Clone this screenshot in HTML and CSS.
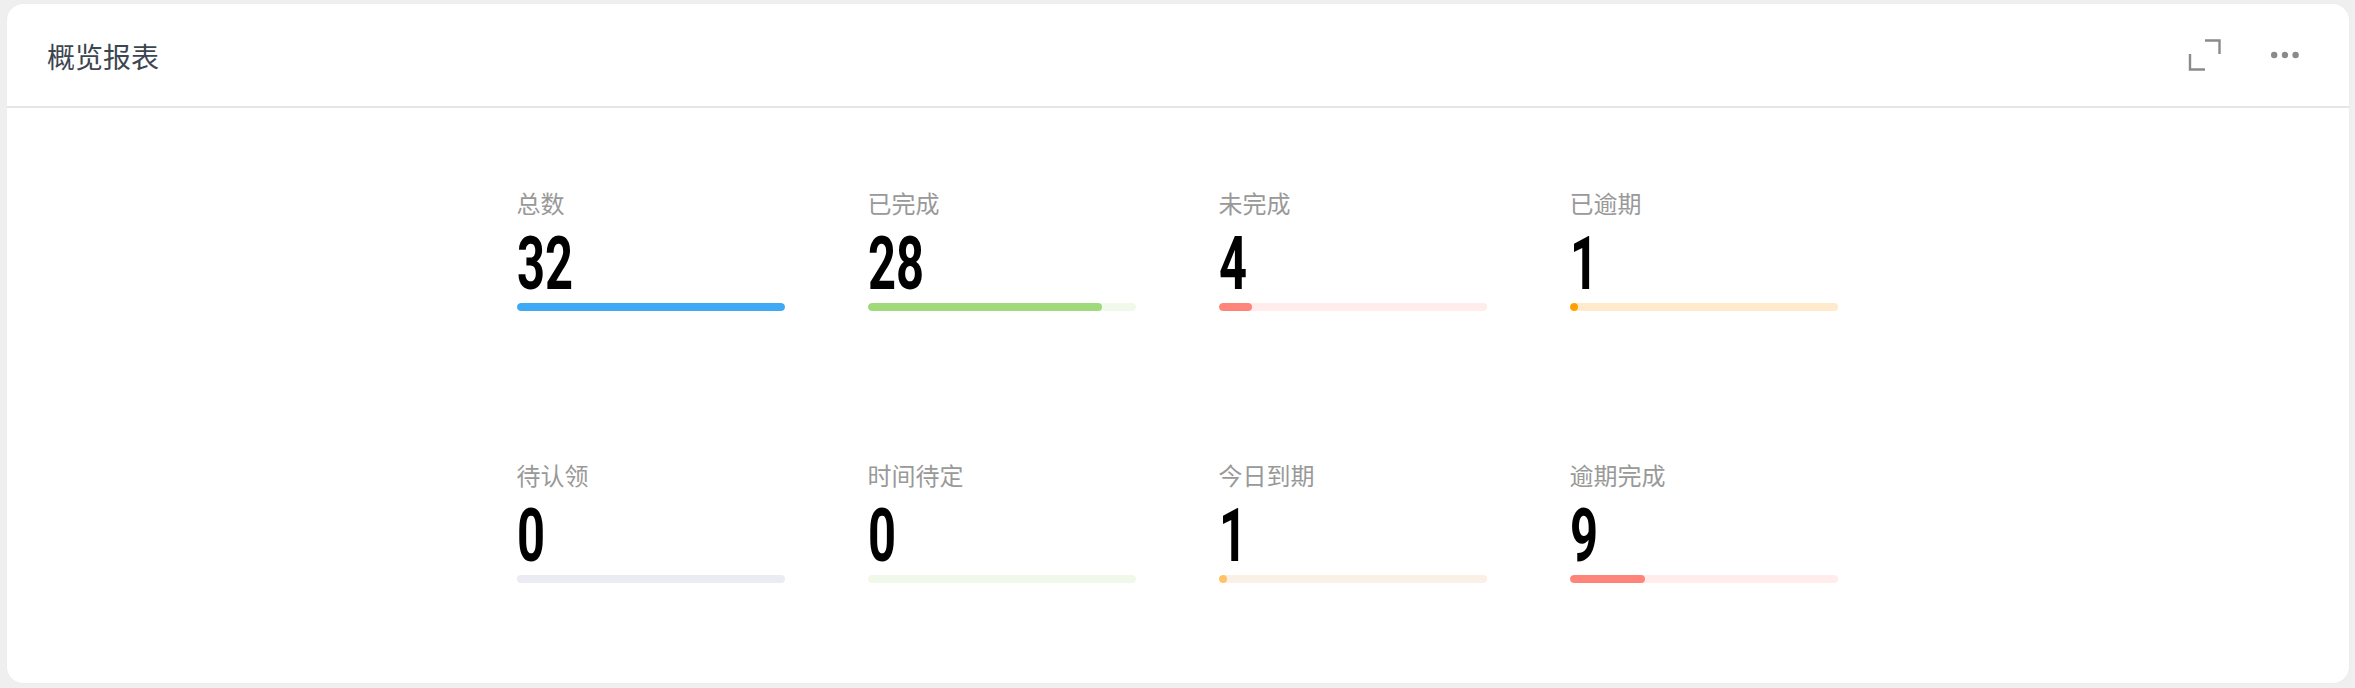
FILE: index.html
```html
<!DOCTYPE html>
<html lang="zh-CN">
<head>
<meta charset="utf-8">
<title>概览报表</title>
<link rel="stylesheet" href="styles.css">
</head>
<body>
<div class="card">
  <div class="card-header">
    <div class="card-title">概览报表</div>
    <div class="card-tools">
      <svg class="icon-expand" width="34" height="34" viewBox="0 0 34 34">
        <path d="M17 2.5 H31.5 V16" fill="none" stroke="#8a8a8a" stroke-width="2.4"/>
        <path d="M2 16 V31.5 H17" fill="none" stroke="#8a8a8a" stroke-width="2.4"/>
      </svg>
      <svg class="icon-more" width="28" height="8" viewBox="0 0 28 8">
        <circle cx="3.2" cy="4" r="3.2" fill="#8a8a8a"/>
        <circle cx="14" cy="4" r="3.2" fill="#8a8a8a"/>
        <circle cx="24.6" cy="4" r="3.2" fill="#8a8a8a"/>
      </svg>
    </div>
  </div>
  <div class="card-body">
    <div class="stats">
      <div class="stat">
        <div class="stat-label">总数</div>
        <div class="stat-value"><span class="num">32</span></div>
        <div class="bar track-blue"><div class="fill fill-blue" style="width:100%"></div></div>
      </div>
      <div class="stat">
        <div class="stat-label">已完成</div>
        <div class="stat-value"><span class="num">28</span></div>
        <div class="bar track-green"><div class="fill fill-green" style="width:87.5%"></div></div>
      </div>
      <div class="stat">
        <div class="stat-label">未完成</div>
        <div class="stat-value"><span class="num">4</span></div>
        <div class="bar track-red"><div class="fill fill-red" style="width:12.5%"></div></div>
      </div>
      <div class="stat">
        <div class="stat-label">已逾期</div>
        <div class="stat-value"><span class="num">1</span></div>
        <div class="bar track-orange"><div class="fill fill-orange" style="width:3.125%"></div></div>
      </div>
      <div class="stat">
        <div class="stat-label">待认领</div>
        <div class="stat-value"><span class="num">0</span></div>
        <div class="bar track-lavender"><div class="fill fill-lavender" style="width:0%"></div></div>
      </div>
      <div class="stat">
        <div class="stat-label">时间待定</div>
        <div class="stat-value"><span class="num">0</span></div>
        <div class="bar track-lightgreen"><div class="fill fill-green" style="width:0%"></div></div>
      </div>
      <div class="stat">
        <div class="stat-label">今日到期</div>
        <div class="stat-value"><span class="num">1</span></div>
        <div class="bar track-peach"><div class="fill fill-peach" style="width:3.125%"></div></div>
      </div>
      <div class="stat">
        <div class="stat-label">逾期完成</div>
        <div class="stat-value"><span class="num">9</span></div>
        <div class="bar track-red"><div class="fill fill-red" style="width:28.125%"></div></div>
      </div>
    </div>
  </div>
</div>
</body>
</html>
```
FILE: styles.css
```css
html, body {
  margin: 0;
  height: 100%;
}
body {
  background: #efefef;
  padding: 4px 6px 5px 7px;
  box-sizing: border-box;
  font-family: "Liberation Sans", "Noto Sans CJK SC", sans-serif;
  display: flex;
}
.card {
  flex: 1;
  background: #ffffff;
  border-radius: 16px;
  display: flex;
  flex-direction: column;
  box-shadow: 0 0 2px rgba(0, 0, 0, 0.04);
}
.card-header {
  height: 102px;
  border-bottom: 2px solid #e6e6e6;
  display: flex;
  align-items: center;
  justify-content: space-between;
  padding: 0 50px 0 40px;
}
.card-title {
  font-size: 28px;
  color: #3c4650;
  margin-top: 1px;
}
.card-tools {
  display: flex;
  align-items: center;
  gap: 49px;
}
.icon-expand {
  display: block;
}
.icon-more {
  display: block;
}
.card-body {
  flex: 1;
  display: flex;
  justify-content: center;
  padding-top: 81px;
}
.stats {
  display: grid;
  grid-template-columns: repeat(4, 268px);
  column-gap: 83px;
  row-gap: 150px;
  align-content: start;
  margin-left: -2px;
}
.stat {
  display: flex;
  flex-direction: column;
}
.stat-label {
  font-size: 24px;
  line-height: 32px;
  color: #999999;
}
.stat-value {
  margin-top: 6px;
  height: 74px;
  line-height: 74px;
  font-family: Roboto, "Liberation Sans", sans-serif;
  font-weight: 700;
  font-size: 74px;
  color: #000000;
  white-space: nowrap;
}
.num {
  display: inline-block;
  transform: scaleX(0.66);
  transform-origin: left center;
}
.bar {
  margin-top: 2px;
  height: 8px;
  border-radius: 4px;
  overflow: hidden;
}
.fill {
  height: 100%;
  border-radius: 4px;
}
.track-blue { background: #e3f2fd; }
.fill-blue { background: #3fa9f5; }
.track-green { background: #f0f9ea; }
.fill-green { background: #a0d97a; }
.track-red { background: #ffeceb; }
.fill-red { background: #ff857a; }
.track-orange { background: #ffebcb; }
.fill-orange { background: #ffa000; }
.track-lavender { background: #ebebf3; }
.fill-lavender { background: #b8b8d8; }
.track-lightgreen { background: #f0f8ea; }
.track-peach { background: #faf0e5; }
.fill-peach { background: #ffc266; }
```
